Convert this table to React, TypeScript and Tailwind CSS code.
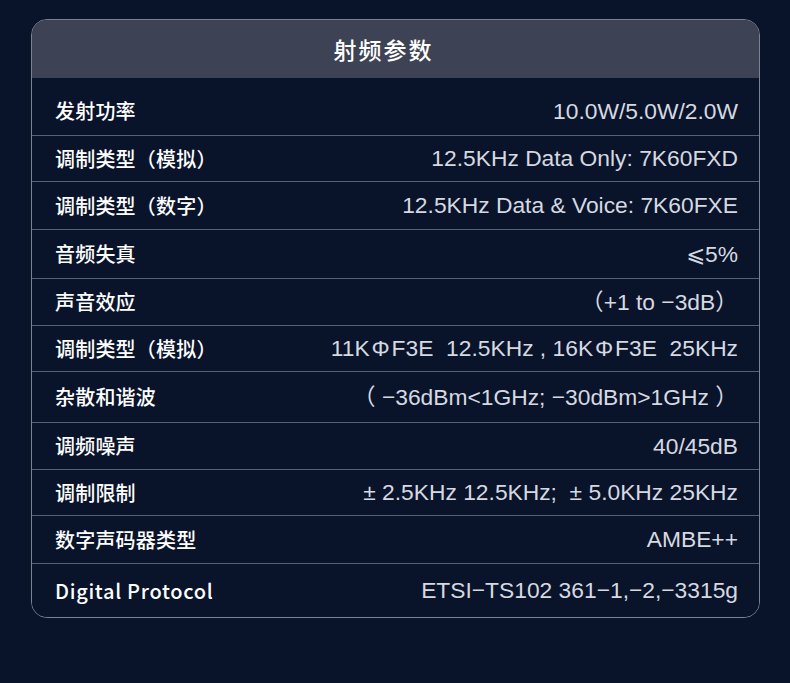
const rows: { label: string; value: string; h: string }[] = [
  { label: "发射功率", value: "10.0W/5.0W/2.0W", h: "h-[49px]" },
  { label: "调制类型（模拟）", value: "12.5KHz Data Only: 7K60FXD", h: "h-[46px]" },
  { label: "调制类型（数字）", value: "12.5KHz Data & Voice: 7K60FXE", h: "h-[48px]" },
  { label: "音频失真", value: "⩽5%", h: "h-[49px]" },
  { label: "声音效应", value: "（+1 to −3dB）", h: "h-[47px]" },
  { label: "调制类型（模拟）", value: "11K\u200AΦ\u200AF3E  12.5KHz , 16K\u200AΦ\u200AF3E  25KHz", h: "h-[46px]" },
  { label: "杂散和谐波", value: "（ −36dBm<1GHz; −30dBm>1GHz ）", h: "h-[51px]" },
  { label: "调频噪声", value: "40/45dB", h: "h-[47px]" },
  { label: "调制限制", value: "± 2.5KHz 12.5KHz;  ± 5.0KHz 25KHz", h: "h-[46px]" },
  { label: "数字声码器类型", value: "AMBE++", h: "h-[48px]" },
  { label: "Digital Protocol", value: "ETSI−TS102 361−1,−2,−3315g", h: "h-[53px]" },
];

export default function App() {
  return (
    <div className="min-h-[683px] w-full bg-[#09142b] pt-[19px] pl-[31px]">
      <section className="w-[729px] rounded-2xl border border-[#7b8292] overflow-hidden">
        {/* 标题栏 */}
        <div className="h-[58px] bg-[#3d4354] flex items-center justify-center pr-[24px]">
          <h2 className="text-[23px] font-medium text-white tracking-[2px] font-['Noto_Sans_CJK_SC',sans-serif]">
            射频参数
          </h2>
        </div>

        {/* 参数列表 */}
        <div className="bg-[#09142b] pt-[9px]">
          {rows.map((r, i) => (
            <div
              key={i}
              className={`${r.h} flex items-center justify-between pl-[23px] pr-[21px] ${
                i < rows.length - 1 ? "border-b border-[#596070]" : ""
              }`}
            >
              <span
                className={`text-[20px] font-medium text-white font-['Noto_Sans_CJK_SC',sans-serif] ${
                  i === rows.length - 1 ? "tracking-[0.7px]" : "tracking-[0.2px]"
                }`}
              >
                {r.label}
              </span>
              <span className="text-[22.8px] text-[#d6d9e0] whitespace-pre font-['Liberation_Sans','DejaVu_Sans','Noto_Sans_CJK_SC',sans-serif]">
                {r.value}
              </span>
            </div>
          ))}
        </div>
      </section>
    </div>
  );
}
